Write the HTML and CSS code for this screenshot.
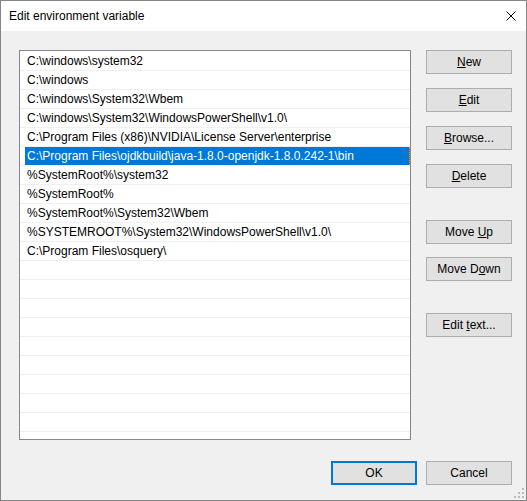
FILE: index.html
```html
<!DOCTYPE html>
<html lang="en">
<head>
<meta charset="utf-8">
<title>Edit environment variable</title>
<link rel="stylesheet" href="styles.css">
</head>
<body>
<div class="window">
  <div class="titlebar">
    <span class="title">Edit environment variable</span>
    <svg class="close" width="10" height="10" viewBox="0 0 10 10"><path d="M0.5 0.5 L9.5 9.5 M9.5 0.5 L0.5 9.5" stroke="#000" stroke-width="1" fill="none"/></svg>
  </div>
  <div class="body">
    <div class="main">
      <div class="list">
        <div class="row"><span class="cell">C:\windows\system32</span></div>
        <div class="row"><span class="cell">C:\windows</span></div>
        <div class="row"><span class="cell">C:\windows\System32\Wbem</span></div>
        <div class="row"><span class="cell">C:\windows\System32\WindowsPowerShell\v1.0\</span></div>
        <div class="row"><span class="cell">C:\Program Files (x86)\NVIDIA\License Server\enterprise</span></div>
        <div class="row selected"><span class="cell">C:\Program Files\ojdkbuild\java-1.8.0-openjdk-1.8.0.242-1\bin</span></div>
        <div class="row"><span class="cell">%SystemRoot%\system32</span></div>
        <div class="row"><span class="cell">%SystemRoot%</span></div>
        <div class="row"><span class="cell">%SystemRoot%\System32\Wbem</span></div>
        <div class="row"><span class="cell">%SYSTEMROOT%\System32\WindowsPowerShell\v1.0\</span></div>
        <div class="row"><span class="cell">C:\Program Files\osquery\</span></div>
        <div class="row"><span class="cell"></span></div>
        <div class="row"><span class="cell"></span></div>
        <div class="row"><span class="cell"></span></div>
        <div class="row"><span class="cell"></span></div>
        <div class="row"><span class="cell"></span></div>
        <div class="row"><span class="cell"></span></div>
        <div class="row"><span class="cell"></span></div>
        <div class="row"><span class="cell"></span></div>
        <div class="row"><span class="cell"></span></div>
        <div class="row"><span class="cell"></span></div>
      </div>
      <div class="side">
        <div class="group g1">
          <button class="btn"><u>N</u>ew</button>
          <button class="btn"><u>E</u>dit</button>
          <button class="btn"><u>B</u>rowse...</button>
          <button class="btn"><u>D</u>elete</button>
        </div>
        <div class="group g2">
          <button class="btn">Move <u>U</u>p</button>
          <button class="btn">Move D<u>o</u>wn</button>
        </div>
        <div class="group">
          <button class="btn">Edit <u>t</u>ext...</button>
        </div>
      </div>
    </div>
    <div class="footer">
      <button class="btn default">OK</button>
      <button class="btn">Cancel</button>
    </div>
    <svg class="grip" width="11" height="11" viewBox="0 0 11 11">
      <rect x="8" y="0" width="2" height="2" fill="#bcbcbc"/>
      <rect x="4" y="4" width="2" height="2" fill="#bcbcbc"/>
      <rect x="8" y="4" width="2" height="2" fill="#bcbcbc"/>
      <rect x="0" y="8" width="2" height="2" fill="#bcbcbc"/>
      <rect x="4" y="8" width="2" height="2" fill="#bcbcbc"/>
      <rect x="8" y="8" width="2" height="2" fill="#bcbcbc"/>
    </svg>
  </div>
</div>
</body>
</html>
```
FILE: styles.css
```css
* { box-sizing: border-box; }
html, body { margin: 0; padding: 0; }
body {
  font-family: "Liberation Sans", Arial, sans-serif;
  font-size: 12px;
  color: #000;
  background: #f0f0f0;
}
.window {
  width: 527px;
  height: 501px;
  border: 1px solid #858585;
  background: #f0f0f0;
  display: flex;
  flex-direction: column;
  position: relative;
}
.titlebar {
  height: 30px;
  background: #fff;
  display: flex;
  align-items: center;
  justify-content: space-between;
  padding: 0 10px 0 8px;
  flex: none;
}
.title { font-size: 12px; color: #000; }
.close { display: block; }
.body {
  flex: 1;
  padding: 19px 14px 0 18px;
  display: flex;
  flex-direction: column;
}
.main {
  display: flex;
  gap: 15px;
}
.list {
  width: 392px;
  height: 390px;
  border: 1px solid #828790;
  background: #fff;
  padding-top: 1px;
  overflow: hidden;
  flex: none;
}
.row {
  height: 19px;
  border-bottom: 1px solid #f0f0f0;
}
.cell {
  display: block;
  height: 18px;
  line-height: 18px;
  margin-left: 5px;
  padding-left: 2px;
  white-space: nowrap;
}
.selected .cell {
  background: #0078d7;
  color: #fff;
  border-right: 1px dotted #f0a050;
}
.side {
  width: 86px;
  display: flex;
  flex-direction: column;
  gap: 32px;
}
.group {
  display: flex;
  flex-direction: column;
  gap: 14px;
}
.g2 { gap: 13px; }
.btn {
  width: 86px;
  height: 24px;
  background: #e1e1e1;
  border: 1px solid #adadad;
  font-family: "Liberation Sans", Arial, sans-serif;
  font-size: 12px;
  color: #000;
  padding: 0;
  margin: 0;
  text-align: center;
}
.btn.default {
  border: 2px solid #0078d7;
}
.footer {
  display: flex;
  justify-content: flex-end;
  gap: 9px;
  margin-top: 21px;
}
.grip {
  position: absolute;
  right: 1px;
  bottom: 1px;
}
```
